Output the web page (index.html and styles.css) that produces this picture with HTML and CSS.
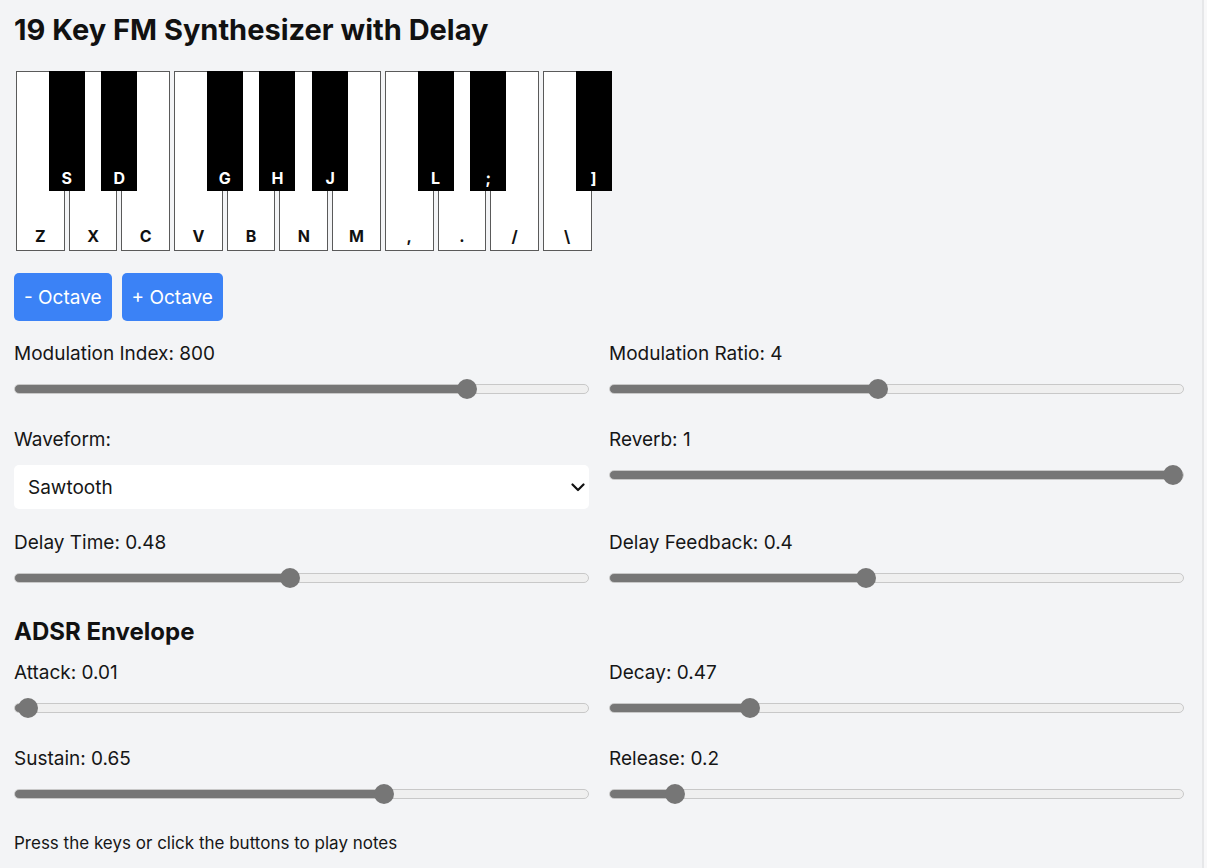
FILE: index.html
```html
<!DOCTYPE html>
<html lang="en">
<head>
<meta charset="utf-8">
<title>19 Key FM Synthesizer with Delay</title>
<link rel="stylesheet" href="styles.css">
</head>
<body>
<div class="page">
  <h1 class="title">19 Key FM Synthesizer with Delay</h1>

  <div class="keyboard">
    <div class="key white"><span>Z</span></div>
    <div class="key black"><span>S</span></div>
    <div class="key white"><span>X</span></div>
    <div class="key black"><span>D</span></div>
    <div class="key white"><span>C</span></div>
    <div class="key white"><span>V</span></div>
    <div class="key black"><span>G</span></div>
    <div class="key white"><span>B</span></div>
    <div class="key black"><span>H</span></div>
    <div class="key white"><span>N</span></div>
    <div class="key black"><span>J</span></div>
    <div class="key white"><span>M</span></div>
    <div class="key white"><span>,</span></div>
    <div class="key black"><span>L</span></div>
    <div class="key white"><span>.</span></div>
    <div class="key black"><span>;</span></div>
    <div class="key white"><span>/</span></div>
    <div class="key white"><span>\</span></div>
    <div class="key black"><span>]</span></div>
  </div>

  <div class="octave-buttons">
    <button class="btn">- Octave</button>
    <button class="btn">+ Octave</button>
  </div>

  <div class="controls">
    <div class="control">
      <label class="label">Modulation Index: 800</label>
      <input class="slider" type="range" min="0" max="1" step="0.001" value="0.8" style="--v:0.8">
    </div>
    <div class="control">
      <label class="label">Modulation Ratio: 4</label>
      <input class="slider" type="range" min="0" max="1" step="0.001" value="0.467" style="--v:0.467">
    </div>
    <div class="control">
      <label class="label">Waveform:</label>
      <div class="select-wrap">
        <select class="select">
          <option>Sawtooth</option>
        </select>
        <svg class="chevron" width="14" height="9" viewBox="0 0 14 9"><path d="M1.5 1.5 L7 7 L12.5 1.5" fill="none" stroke="#111" stroke-width="2.2" stroke-linecap="round" stroke-linejoin="round"/></svg>
      </div>
    </div>
    <div class="control">
      <label class="label">Reverb: 1</label>
      <input class="slider" type="range" min="0" max="1" step="0.001" value="1" style="--v:1">
    </div>
    <div class="control">
      <label class="label">Delay Time: 0.48</label>
      <input class="slider" type="range" min="0" max="1" step="0.001" value="0.48" style="--v:0.48">
    </div>
    <div class="control">
      <label class="label">Delay Feedback: 0.4</label>
      <input class="slider" type="range" min="0" max="1" step="0.001" value="0.444" style="--v:0.444">
    </div>
  </div>

  <h2 class="section-title">ADSR Envelope</h2>

  <div class="controls adsr">
    <div class="control">
      <label class="label">Attack: 0.01</label>
      <input class="slider" type="range" min="0" max="1" step="0.001" value="0.005" style="--v:0.005">
    </div>
    <div class="control">
      <label class="label">Decay: 0.47</label>
      <input class="slider" type="range" min="0" max="1" step="0.001" value="0.235" style="--v:0.235">
    </div>
    <div class="control">
      <label class="label">Sustain: 0.65</label>
      <input class="slider" type="range" min="0" max="1" step="0.001" value="0.65" style="--v:0.65">
    </div>
    <div class="control">
      <label class="label">Release: 0.2</label>
      <input class="slider" type="range" min="0" max="1" step="0.001" value="0.1" style="--v:0.1">
    </div>
  </div>

  <p class="hint">Press the keys or click the buttons to play notes</p>
</div>
</body>
</html>
```

FILE: styles.css
```css
html, body {
  margin: 0;
  padding: 0;
}

body {
  background: #f8f8f9;
  font-family: Inter, "Noto Sans", sans-serif;
  color: #161616;
}

.page {
  box-sizing: border-box;
  width: 1204px;
  min-height: 868px;
  padding: 13px 18px 0 14px;
  background: #f3f4f6;
  border-right: 2px solid #e6e7e9;
}

.title {
  margin: 0;
  font-size: 29px;
  line-height: 34px;
  font-weight: 700;
  color: #111;
}

.keyboard {
  display: flex;
  align-items: flex-start;
  margin-top: 24px;
}

.key {
  display: flex;
  flex-direction: column;
  justify-content: flex-end;
  align-items: center;
  box-sizing: border-box;
  font-weight: 700;
  font-size: 16px;
  line-height: 18px;
}

.key span {
  padding-bottom: 5px;
}

.white {
  width: 48.7px;
  height: 180px;
  margin: 0 2px;
  background: #fff;
  border: 1px solid #5a5a5a;
  color: #111;
  flex: none;
}

.black {
  position: relative;
  z-index: 2;
  width: 36px;
  height: 120px;
  margin: 0 -18px;
  background: #000;
  color: #fff;
  flex: none;
}

.black span {
  padding-bottom: 4px;
}

.octave-buttons {
  display: flex;
  gap: 10px;
  margin-top: 22px;
}

.btn {
  height: 48px;
  padding: 0 10px;
  border: none;
  border-radius: 5px;
  background: #3b82f6;
  color: #fff;
  font-family: Inter, "Noto Sans", sans-serif;
  font-size: 19px;
}

.controls {
  display: grid;
  grid-template-columns: 1fr 1fr;
  column-gap: 20px;
  row-gap: 21px;
  margin-top: 20px;
}

.control {
  display: flex;
  flex-direction: column;
}

.label {
  font-size: 19px;
  line-height: 26px;
  margin-bottom: 5px;
}

.slider {
  -webkit-appearance: none;
  appearance: none;
  width: 100%;
  height: 34px;
  margin: 0;
  background: transparent;
}

.slider::-webkit-slider-runnable-track {
  box-sizing: border-box;
  height: 10px;
  border-radius: 5px;
  border: 1px solid #c8c8c8;
  background: linear-gradient(to right, #767676 0, #767676 calc(10px + (100% - 20px) * var(--v)), #efefef calc(10px + (100% - 20px) * var(--v)), #efefef 100%);
}

.slider::-webkit-slider-thumb {
  -webkit-appearance: none;
  appearance: none;
  width: 20px;
  height: 20px;
  border-radius: 50%;
  background: #767676;
  margin-top: -6px;
}

.select-wrap {
  position: relative;
  margin-top: 7px;
}

.select {
  -webkit-appearance: none;
  appearance: none;
  width: 100%;
  height: 44px;
  padding: 0 14px;
  border: none;
  border-radius: 5px;
  background: #fff;
  font-family: Inter, "Noto Sans", sans-serif;
  font-size: 19px;
  color: #161616;
}

.chevron {
  position: absolute;
  right: 4px;
  top: 18px;
}

.section-title {
  margin: 23px 0 14px;
  font-size: 24px;
  line-height: 28px;
  font-weight: 700;
  color: #111;
}

.adsr {
  margin-top: 0;
}

.hint {
  margin: 21px 0 0;
  font-size: 17px;
  line-height: 22px;
}
```
